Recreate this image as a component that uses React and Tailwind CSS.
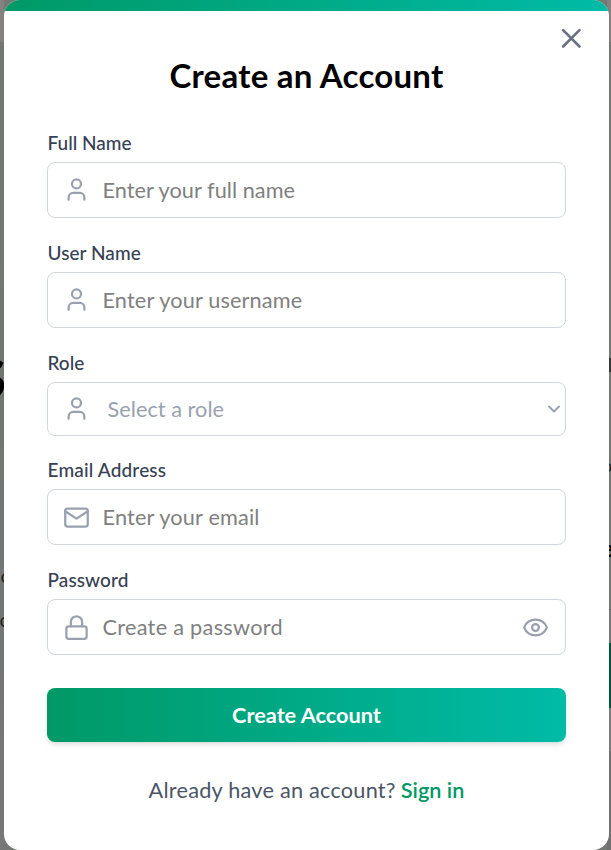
import { User, Lock, Eye, X, ChevronDown } from "lucide-react";

function Envelope({ className }) {
  return (
    <svg className={className} viewBox="0 0 24 24" fill="none" stroke="currentColor" strokeWidth="2" strokeLinecap="round" strokeLinejoin="round">
      <rect x="2" y="4" width="20" height="16" rx="2" />
      <path d="M22 6.4 12 13 2 6.4" />
    </svg>
  );
}

function Field({ label, icon: Icon, iconClass = "", text, textClass, labelClass = "", boxClass, gapClass, children }) {
  return (
    <div className="flex flex-col">
      <label className={`-mt-px mb-px h-[27px] pl-[0.5px] text-[19px] leading-[27px] font-medium text-[#364153] whitespace-nowrap ${labelClass}`}>{label}</label>
      <div className={`mt-[5px] flex items-center rounded-[8px] border border-[#d1d5dc] pl-[15px] ${boxClass}`}>
        <Icon className={`size-[27px] shrink-0 text-[#99a1af] ${iconClass}`} strokeWidth={2} />
        <span className={`whitespace-nowrap text-[21.7px] leading-[32px] ${gapClass} ${textClass}`}>{text}</span>
        {children}
      </div>
    </div>
  );
}

function PageBehind() {
  return (
    <div className="absolute inset-0 flex justify-between overflow-hidden bg-[#747974]">
      <div className="relative flex h-full w-1 flex-col overflow-hidden bg-linear-to-b from-[#707872] to-[#777777]">
        <div className="h-[43px] border-b border-[#747270] bg-[#858180]" />
        <span className="absolute right-[-2px] top-[346px] text-[54px] leading-[64px] font-black text-black">S</span>
        <span className="absolute right-[-6px] top-[561px] text-[20px] leading-7 text-[#222]">c</span>
        <span className="absolute right-[-5px] top-[605px] text-[20px] leading-7 text-[#222]">oc</span>
      </div>
      <div className="relative flex h-full w-1 flex-col overflow-hidden bg-[#747774]">
        <div className="h-[43px] border-b border-[#747270] bg-[#858180]" />
        <div className="mt-[315px] h-[14px] bg-[#343735]" />
        <span className="absolute left-[-5px] top-[451px] text-[18px] leading-7 text-[#222]">o</span>
        <span className="absolute left-[-5px] top-[535px] text-[22px] leading-7 font-bold text-black">e</span>
        <div className="mt-[237px] h-[34px] border-t border-[#666] bg-[#777]" />
        <div className="h-[65px] bg-[#00553d]" />
        <div className="h-[43px] bg-[#7b7b7b]" />
        <div className="flex-1 bg-[#707070]" />
      </div>
    </div>
  );
}

export default function App() {
  return (
    <div className="relative h-[850px] w-[611px] overflow-hidden font-['Lato',sans-serif]">
      <PageBehind />
      <div className="relative ml-1 flex h-[850px] w-[605px] flex-col overflow-hidden rounded-[16px] bg-white">
        <div className="h-[11px] shrink-0 bg-linear-to-r from-[#009966] to-[#00bba7]" />
        <button className="absolute right-[21px] top-[22px] text-[#6a7282]">
          <X className="size-[32.6px]" strokeWidth={2} />
        </button>
        <div className="flex flex-col pl-[43px] pr-[43px]">
          <h2 className="mt-[43px] h-[43px] text-center text-[33px] leading-[43px] font-bold tracking-[0.25px] text-black whitespace-nowrap">Create an Account</h2>
          <div className="mt-[33px] flex flex-col">
            <Field label="Full Name" icon={User} iconClass="-mt-[2px]" text="Enter your full name" textClass="text-[#808080] tracking-[0.04px]" gapClass="ml-[12.5px]" boxClass="h-[56px]" />
            <div className="h-[22px]" />
            <Field label="User Name" labelClass="tracking-[0.06px]" icon={User} iconClass="-mt-[2px]" text="Enter your username" textClass="text-[#808080] tracking-[0.15px]" gapClass="ml-[12.5px]" boxClass="h-[56px]" />
            <div className="h-[22px]" />
            <Field label="Role" icon={User} iconClass="-mt-[2px]" text="Select a role" textClass="text-[#99a1af] tracking-[0.04px]" gapClass="ml-[17.5px]" boxClass="h-[54px]">
              <ChevronDown className="ml-auto mr-[1.5px] size-[20px] text-[#99a1af]" strokeWidth={2.3} />
            </Field>
            <div className="h-[21px]" />
            <Field label="Email Address" labelClass="tracking-[0.17px]" icon={Envelope} text="Enter your email" textClass="text-[#808080] tracking-[0.17px]" gapClass="ml-[12.5px]" boxClass="h-[56px]" />
            <div className="h-[22px]" />
            <Field label="Password" labelClass="tracking-[0.1px]" icon={Lock} text="Create a password" textClass="text-[#808080] tracking-[0.29px]" gapClass="ml-[12.5px]" boxClass="h-[56px]">
              <Eye className="ml-auto mr-[16px] size-[27px] text-[#99a1af]" strokeWidth={2} />
            </Field>
          </div>
          <button className="mt-[33px] h-[54px] rounded-[8px] bg-linear-to-r from-[#009966] to-[#00bba7] text-[21.7px] font-bold text-white shadow-md">Create Account</button>
          <p className="mt-[32px] text-center text-[21.7px] leading-[33px] text-[#4a5565] whitespace-nowrap">
            <span className="tracking-[0.23px]">Already have an account?</span>
            <span className="ml-[5px] font-semibold text-[#009966]">Sign in</span>
          </p>
        </div>
      </div>
    </div>
  );
}
